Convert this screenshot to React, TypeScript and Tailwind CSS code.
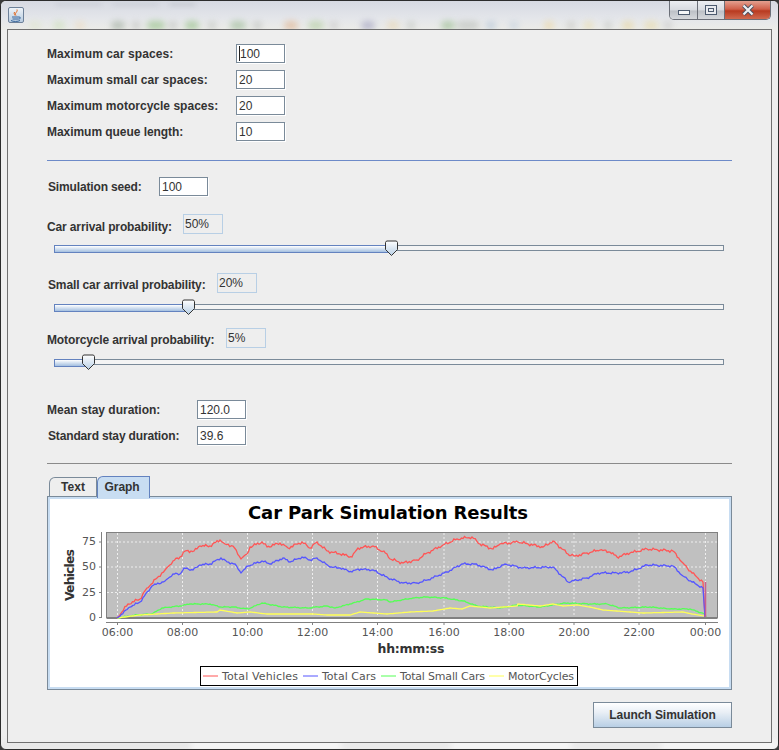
const labelFont = "font-['Liberation_Sans',Arial,sans-serif]";

// pixel coordinates of each series, read off the plot
const red = [[117,617],[128,603],[140,598],[147,587],[157,577],[165,569],[173,560],[180,556],[185,550],[194,550],[200,545],[210,545],[220,539],[225,543],[233,545],[241,558],[247,553],[250,546],[262,541],[267,546],[280,542],[288,547],[302,541],[310,547],[317,541],[327,550],[340,553],[352,556],[358,547],[373,545],[387,553],[390,558],[403,562],[417,559],[427,552],[443,544],[457,538],[472,536],[480,543],[493,548],[500,543],[518,541],[543,546],[553,540],[568,553],[575,555],[587,552],[600,549],[610,551],[617,556],[630,552],[647,548],[673,550],[683,562],[692,572],[703,581],[705,616]];
const blue = [[117,617],[130,606],[140,601],[152,585],[165,580],[173,573],[180,573],[184,567],[193,569],[200,564],[210,563],[221,557],[227,561],[235,563],[241,572],[248,565],[262,560],[270,563],[283,557],[290,561],[302,556],[310,559],[317,557],[330,566],[340,567],[352,571],[358,568],[373,569],[388,577],[403,582],[417,582],[427,579],[447,571],[462,563],[475,563],[493,569],[505,563],[523,567],[553,566],[568,581],[587,577],[598,572],[617,572],[630,571],[647,564],[673,565],[683,575],[692,581],[703,587],[705,616]];
const green = [[117,617],[137,614],[152,613],[162,607],[180,605],[190,603],[210,603],[220,606],[233,606],[248,608],[262,602],[283,606],[307,607],[327,605],[335,607],[350,603],[367,598],[387,599],[390,601],[413,597],[427,596],[445,597],[463,600],[477,605],[500,607],[517,604],[540,606],[565,602],[590,603],[607,603],[620,607],[650,606],[670,608],[690,608],[705,613],[706,616]];
const yellow = [[117,617],[140,614],[157,613],[173,612],[217,611],[220,609],[237,612],[250,611],[267,613],[297,613],[313,613],[327,614],[350,614],[360,611],[387,613],[410,611],[433,610],[450,607],[462,608],[470,605],[490,607],[517,605],[518,603],[540,605],[553,603],[563,605],[577,604],[590,606],[603,609],[630,611],[643,612],[683,611],[692,613],[705,615]];

// blurred things behind the glass frame: x, width, colour
const blobs: [number, number, string][] = [
  [28, 12, '#dfe6d0'], [52, 12, '#cfe0c0'], [74, 10, '#ecdcc4'], [110, 14, '#a8b4a8'], [131, 8, '#c0c4c0'], [146, 18, '#9cc490'],
  [168, 8, '#c0c4c0'], [184, 14, '#9cc490'], [207, 8, '#c4c8c4'], [229, 16, '#a4c0a0'], [252, 9, '#c0c4c0'], [283, 14, '#e0b898'],
  [307, 16, '#b8d0a8'], [329, 8, '#c8c8c8'], [360, 14, '#a8a8c4'], [386, 12, '#e8d8b8'], [406, 8, '#c4c8c4'], [440, 14, '#a0c098'],
  [456, 22, '#c0c4c0'], [485, 10, '#b8c8d8'], [508, 10, '#c8d4e0'], [543, 10, '#ecd8a8'], [566, 8, '#c8c8c4'], [583, 9, '#e8dcb0'],
  [604, 6, '#c0c4c0'], [621, 12, '#e8d8a8'], [643, 14, '#e8dcb0'], [663, 8, '#c8c8c8'],
];

function jagged(pts: number[][], amp: number) {
  // fill in between the read points with a small repeatable wobble
  const out: string[] = [];
  for (let i = 0; i < pts.length - 1; i++) {
    const [x0, y0] = pts[i];
    const [x1, y1] = pts[i + 1];
    const steps = Math.max(1, Math.round((x1 - x0) / 1.5));
    for (let s = 0; s < steps; s++) {
      const x = x0 + ((x1 - x0) * s) / steps;
      const n = Math.sin(x * 1.7) + Math.sin(x * 0.63 + 1);
      const y = y0 + ((y1 - y0) * s) / steps + (s === 0 ? 0 : n * amp);
      out.push(`${x.toFixed(1)},${y.toFixed(1)}`);
    }
  }
  const last = pts[pts.length - 1];
  out.push(`${last[0]},${last[1]}`);
  return out.join(' ');
}

function Field({ value, caret }: { value: string; caret?: boolean }) {
  return (
    <div className="h-[19px] w-[49px] shrink-0 bg-white border border-[#7a8a99] shadow-[1px_1px_0_#fff] pl-[2px] flex items-center text-[12px] text-[#333]">
      {caret && <span className="w-px h-[15px] bg-[#222]" />}
      {value}
    </div>
  );
}

function Label({ children, className = '' }: { children: string; className?: string }) {
  return <span className={`block pt-[2px] font-bold text-[12px] leading-[15px] text-[#333] whitespace-nowrap ${className}`}>{children}</span>;
}

function Slider({ pos }: { pos: number }) {
  return (
    <div className="relative ml-[46px] w-[670px] h-[6px] border border-[#7a8a99] bg-[#f4f4f4]">
      <div className="-ml-px -my-px h-[6px] box-content border-y border-l border-[#6382bf] bg-[linear-gradient(#fff,#a3bfe0)]" style={{ width: pos }} />
      <svg className="absolute top-[-6px]" style={{ left: pos - 7 }} width="15" height="17" viewBox="0 0 15 17">
        <defs>
          <linearGradient id="thumb" x1="0" y1="0" x2="0" y2="1">
            <stop offset="0" stopColor="#fff" />
            <stop offset="1" stopColor="#b8cfe5" />
          </linearGradient>
        </defs>
        <path d="M1.5 2.5 L2.5 1 H12.5 L13.5 2.5 V9.5 L7.5 15.5 L1.5 9.5 Z" fill="url(#thumb)" stroke="#333" />
      </svg>
    </div>
  );
}

function ReadOut({ value }: { value: string }) {
  return <div className="h-[20px] w-[40px] border border-[#b8cfe5] pl-[1px] flex items-center text-[12px] text-[#333]">{value}</div>;
}

function Chart() {
  const hours = ['06:00', '08:00', '10:00', '12:00', '14:00', '16:00', '18:00', '20:00', '22:00', '00:00'];
  const xs = [117.5, 182.5, 247.5, 312.5, 377.5, 444, 509, 574, 639, 705.5];
  const ys: [string, number][] = [['75', 541], ['50', 566], ['25', 591.5], ['0', 616.5]];
  const legend = [
    ['#ff5555', 'Total Vehicles', 203, 222, 76],
    ['#5555ff', 'Total Cars', 303, 322, 54],
    ['#55ff55', 'Total Small Cars', 381, 400, 85],
    ['#ffff55', 'MotorCycles', 489, 508, 66],
  ] as const;
  return (
    <svg className="block font-['DejaVu_Sans',sans-serif]" width="679" height="188" viewBox="50 498 679 188">
      <text x="388" y="518" textAnchor="middle" fontSize="18" fontWeight="bold" fill="#000" textLength="280">Car Park Simulation Results</text>
      <rect x="106.5" y="531.5" width="611" height="85" fill="#c0c0c0" stroke="#808080" />
      <path d="M106.5 617.5 H717.5" stroke="#808080" />
      {xs.map((x) => (
        <path key={x} d={`M${x} 532 V616`} stroke="#eee" strokeDasharray="2 2" />
      ))}
      {ys.slice(0, 3).map(([, y]) => (
        <path key={y} d={`M107 ${y} H717`} stroke="#eee" strokeDasharray="2 2" />
      ))}
      <polyline points={jagged(green, 0.3)} fill="none" stroke="#55ff55" strokeWidth="1.3" />
      <polyline points={jagged(yellow, 0)} fill="none" stroke="#ffff55" strokeWidth="1.3" />
      <polyline points={jagged(red, 0.8)} fill="none" stroke="#ff5555" strokeWidth="1.3" />
      <polyline points={jagged(blue, 0.6)} fill="none" stroke="#5555ff" strokeWidth="1.3" />
      <path d="M705.5 581 V616" stroke="#c8608f" strokeWidth="1.5" />
      {/* axes */}
      <path d="M101.5 531 V617" stroke="#808080" />
      <path d="M106 621.5 H718" stroke="#808080" />
      {ys.map(([t, y]) => (
        <g key={t}>
          <path d={`M99 ${y} H102`} stroke="#808080" />
          <text x="96" y={y + 3} textAnchor="end" fontSize="11" fill="#555">{t}</text>
        </g>
      ))}
      {hours.map((h, i) => (
        <g key={h}>
          <path d={`M${xs[i]} 621 V624`} stroke="#808080" />
          <text x={xs[i]} y="635" textAnchor="middle" fontSize="11" fill="#555">{h}</text>
        </g>
      ))}
      <text x="411" y="652" textAnchor="middle" fontSize="12.5" fontWeight="bold" fill="#333" textLength="67">hh:mm:ss</text>
      <text transform="translate(74 574) rotate(-90)" textAnchor="middle" fontSize="12.5" fontWeight="bold" fill="#333" textLength="52">Vehicles</text>
      <rect x="200.5" y="665.5" width="377" height="19" fill="#fff" stroke="#000" />
      {legend.map(([c, t, x0, x1, w]) => (
        <g key={t}>
          <path d={`M${x0} 675 H${x0 + 15}`} stroke={c} />
          <text x={x1} y="679" fontSize="11" fill="#555" textLength={w}>{t}</text>
        </g>
      ))}
    </svg>
  );
}

export default function App() {
  return (
    <div className="w-[779px] h-[750px] bg-[#3a3a3a]">
      <div className={`relative w-full h-full overflow-hidden rounded-[6px] border border-[#2c2c2c] bg-[#eeeeee] ${labelFont}`}>
        {/* blurred desktop showing through the glass frame */}
        <div className="absolute inset-x-0 top-0 h-[29px] bg-[linear-gradient(#d6d9e2,#e4e6ea_60%,#ecece8)]" />
        <div className="absolute inset-x-0 top-[20px] h-[9px] blur-[3px] opacity-70">
          {blobs.map(([x, w, c]) => (
            <div key={x} className="absolute top-0 h-[9px] rounded-full" style={{ left: x, width: w, background: c }} />
          ))}
        </div>
        <div className="absolute left-[55px] top-[2px] flex gap-[12px] blur-[2px] opacity-60">
          <div className="w-[45px] h-[3px] bg-[#c4c8d0]" />
          <div className="w-[45px] h-[3px] bg-[#c4c8d0]" />
          <div className="w-[25px] h-[3px] bg-[#b8bcc4]" />
        </div>
        <div className="absolute inset-x-0 bottom-0 h-[7px] flex blur-[3px]">
          <div className="w-[190px] bg-[#e6e6e6]" />
          <div className="w-[150px] bg-[#f8f8f8]" />
          <div className="w-[110px] bg-[#e8e8e8]" />
          <div className="w-[120px] bg-[#f8f8f8]" />
          <div className="w-[90px] bg-[#e8e8e8]" />
          <div className="flex-1 bg-[#f8f8f8]" />
        </div>

        {/* title bar */}
        <div className="relative h-[28px] flex justify-between">
          <div className="ml-[7px] mt-[6px] w-[16px] h-[16px] rounded-[2px] border border-[#6d8199] bg-[linear-gradient(#eef3f8,#b8cce0)] flex items-center justify-center">
            <svg width="12" height="13" viewBox="0 0 12 13">
              <path d="M7 0.5 C8 3 4 4 6 6.5 M4.5 3 C3.5 5 5 5.5 5 6.5" stroke="#e2661c" fill="none" />
              <path d="M2 8 H9 M2.5 10 H8.5 M1 11.5 C3 12.8 8 12.8 10 11.5 M9 8 C11 8 11 10 8.5 10" stroke="#38669c" fill="none" />
            </svg>
          </div>
          <div className="mr-[7px] flex h-[19px] w-[102px] rounded-b-[5px] overflow-hidden border border-t-0 border-[#6b6f78]">
            <div className="w-[28px] bg-[linear-gradient(#eceef2,#d8dbe0_50%,#bcc0c6_55%,#d5d8dc)] border-r border-[#6b6f78] flex items-center justify-center">
              <div className="w-[12px] h-[5px] mt-[5px] bg-[#f4f6f8] border border-[#4c5a6e]" />
            </div>
            <div className="w-[27px] bg-[linear-gradient(#eceef2,#d8dbe0_50%,#bcc0c6_55%,#d5d8dc)] border-r border-[#6b6f78] flex items-center justify-center">
              <div className="w-[12px] h-[10px] border border-[#4c5a6e] bg-[#e8eaee] flex items-center justify-center">
                <div className="w-[6px] h-[4px] border border-[#4c5a6e]" />
              </div>
            </div>
            <div className="flex-1 bg-[linear-gradient(#e4a090,#d0604a_45%,#b83a20_55%,#d06a50)] flex items-center justify-center">
              <svg width="14" height="12" viewBox="0 0 14 12">
                <path d="M2.5 1.5 L11.5 10.5 M11.5 1.5 L2.5 10.5" stroke="#4a5160" strokeWidth="4" />
                <path d="M2.5 1.5 L11.5 10.5 M11.5 1.5 L2.5 10.5" stroke="#eef0f4" strokeWidth="2.2" />
              </svg>
            </div>
          </div>
        </div>

        {/* content pane */}
        <div className="relative mx-[6px] w-[765px] h-[714px] bg-[#eeeeee] border border-[#707070] pt-[14px] pr-[39px]">
          <div className="pl-[39px] flex flex-col gap-[7px]">
            {[
              ['Maximum car spaces:', '100', 'tracking-[0.08px]'],
              ['Maximum small car spaces:', '20', 'tracking-[0.08px]'],
              ['Maximum motorcycle spaces:', '20', 'tracking-[0.02px]'],
              ['Maximum queue length:', '10', 'tracking-[-0.05px]'],
            ].map(([l, v, t], i) => (
              <div key={l} className="flex items-center justify-between w-[238px]">
                <Label className={t}>{l}</Label>
                <Field value={v} caret={i === 0} />
              </div>
            ))}
          </div>

          <div className="ml-[39px] mt-[19px] h-px bg-[#6d8ac8]" />

          <div className="ml-[40px] mt-[16px] flex items-center">
            <div className="w-[111px]"><Label className="tracking-[-0.15px]">Simulation seed:</Label></div>
            <Field value="100" />
          </div>

          <div className="ml-[39px] mt-[18px] flex items-start">
            <div className="w-[136px] mt-[4px]"><Label className="tracking-[-0.13px]">Car arrival probability:</Label></div>
            <ReadOut value="50%" />
          </div>
          <div className="mt-[10px]"><Slider pos={336} /></div>

          <div className="ml-[40px] mt-[22px] flex items-start">
            <div className="w-[169px] mt-[3px]"><Label className="tracking-[-0.13px]">Small car arrival probability:</Label></div>
            <ReadOut value="20%" />
          </div>
          <div className="mt-[11px]"><Slider pos={133} /></div>

          <div className="ml-[39px] mt-[18px] flex items-start">
            <div className="w-[179px] mt-[3px]"><Label className="tracking-[-0.13px]">Motorcycle arrival probability:</Label></div>
            <ReadOut value="5%" />
          </div>
          <div className="mt-[11px]"><Slider pos={33} /></div>

          <div className="mt-[35px] flex flex-col gap-[7px]">
            <div className="ml-[39px] flex items-center w-[199px] justify-between">
              <Label>Mean stay duration:</Label>
              <Field value="120.0" />
            </div>
            <div className="ml-[40px] flex items-center w-[198px] justify-between">
              <Label className="tracking-[-0.15px]">Standard stay duration:</Label>
              <Field value="39.6" />
            </div>
          </div>

          <div className="ml-[39px] mt-[18px] h-px bg-[#8a8a8a]" />

          {/* tabs */}
          <div className="relative z-10 ml-[41px] mt-[12px] flex h-[20px] items-end text-[12px] font-bold text-[#333]">
            <div className="w-[48px] h-[19px] rounded-tl-[6px] border border-b-0 border-[#7a8a99] bg-[#eeeeee] flex items-center justify-center">Text</div>
            <div className="w-[53px] h-[22px] -mb-[2px] pb-[2px] pr-[3px] rounded-tl-[6px] border border-b-0 border-[#6382bf] bg-[#c8ddf2] flex items-center justify-center tracking-[-0.1px]">Graph</div>
          </div>
          <div className="ml-[39px] w-[685px] h-[194px] border border-[#7a8a99] bg-white">
            <div className="border-2 border-[#c8ddf2] w-full h-full bg-white overflow-hidden">
              <Chart />
            </div>
          </div>

          <div className="mt-[12px] flex justify-end">
            <div className="w-[139px] h-[26px] border border-[#7a8a99] bg-[linear-gradient(#fff,#e8eef5_40%,#b8cfe5)] flex items-center justify-center font-bold text-[12px] text-[#333] tracking-[-0.05px]">
              Launch Simulation
            </div>
          </div>
        </div>
      </div>
    </div>
  );
}
